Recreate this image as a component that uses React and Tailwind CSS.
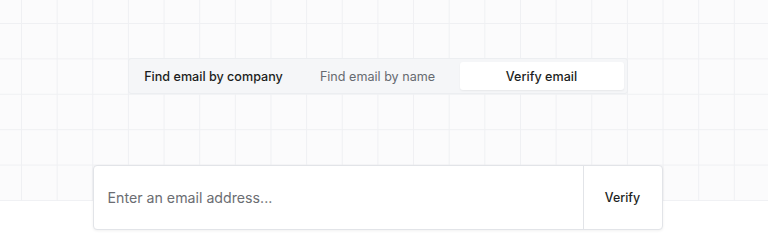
export default function App() {
  const tabs = [
    { label: "Find email by company", active: false, dark: true },
    { label: "Find email by name", active: false, dark: false },
    { label: "Verify email", active: true, dark: true },
  ]

  return (
    <div className="min-h-[250px] w-[768px] bg-white font-['Inter','Liberation_Sans',sans-serif]">
      {/* grid hero */}
      <div className="h-[201px] w-full bg-[#fbfbfc] bg-[linear-gradient(to_right,#eff0f3_1px,transparent_1px),linear-gradient(to_bottom,#eff0f3_1px,transparent_1px)] bg-[size:35.65px_35.4px] bg-[position:21px_23px] pt-[58px]">
        <div className="flex w-[755px] flex-col items-center">
          {/* tabs */}
          <div className="grid h-9 w-[500px] grid-cols-3 rounded-[3px] border border-[#eceef1] bg-[#f5f6f8] p-[3px]">
            {tabs.map((t) => (
              <button
                key={t.label}
                className={
                  t.active
                    ? "flex items-center justify-center rounded-[3px] bg-white pt-[2px] text-[12.6px] font-medium text-[#1c1e21] shadow-[0_1px_2px_rgba(0,0,0,0.06)]"
                    : t.dark
                    ? "flex items-center justify-center pt-[2px] text-[12.6px] font-medium text-[#1c1e21]"
                    : "flex items-center justify-center pt-[2px] text-[12.6px] text-[#666a70]"
                }
              >
                {t.label}
              </button>
            ))}
          </div>

          {/* email input card */}
          <div className="mt-[71px] flex h-[65px] w-[570px] overflow-hidden rounded-[4px] border border-[#e2e4e8] bg-white shadow-[0_1px_3px_rgba(0,0,0,0.06)]">
            <input
              className="flex-1 bg-transparent pt-px pl-[14px] text-[14.2px] text-[#1c1e21] outline-none placeholder:text-[#6b6d72]"
              placeholder="Enter an email address..."
            />
            <button className="w-[79px] border-l border-[#e2e4e8] pt-px text-[12.4px] font-medium text-[#1c1e21]">
              Verify
            </button>
          </div>
        </div>
      </div>
    </div>
  )
}
